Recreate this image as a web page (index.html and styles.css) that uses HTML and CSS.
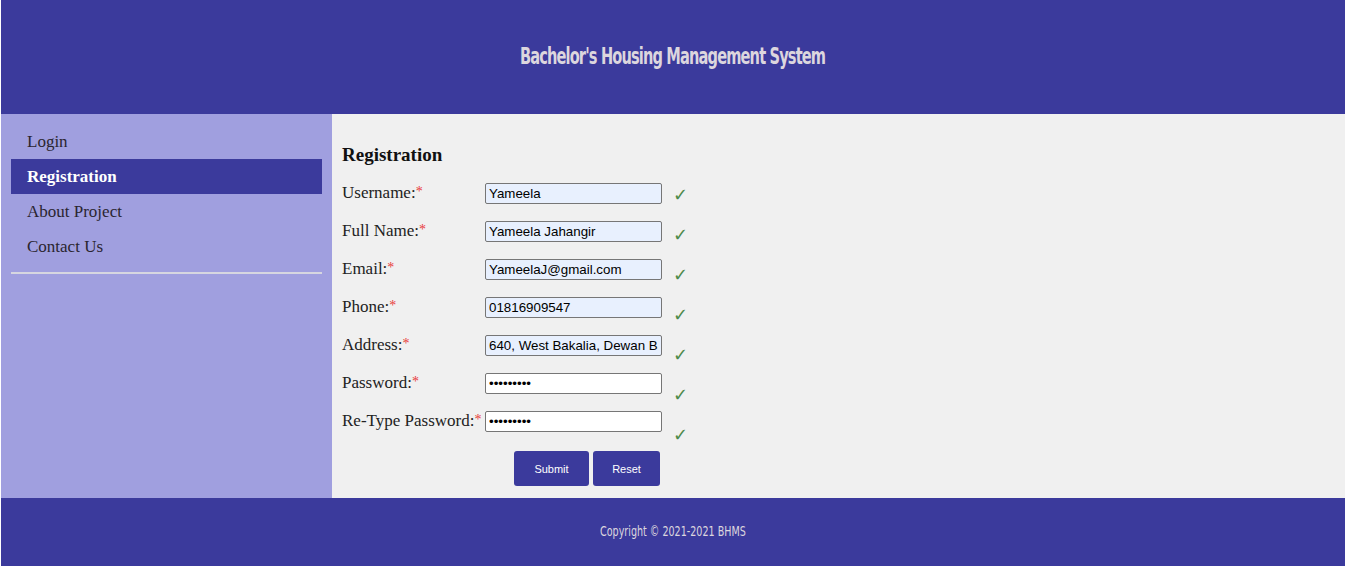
FILE: index.html
```html
<!DOCTYPE html>
<html lang="en">
<head>
<meta charset="utf-8">
<title>BHMS - Registration</title>
<link rel="stylesheet" href="styles.css">
</head>
<body>
<div class="page">
  <header class="top">
    <h1 class="site-title">Bachelor's Housing Management System</h1>
  </header>
  <div class="middle">
    <nav class="side">
      <ul class="menu">
        <li class="menu-item">Login</li>
        <li class="menu-item active">Registration</li>
        <li class="menu-item">About Project</li>
        <li class="menu-item">Contact Us</li>
      </ul>
      <div class="divider"></div>
    </nav>
    <main class="content">
      <h2 class="heading">Registration</h2>
      <div class="form-wrap">
        <form class="form">
          <div class="row"><label class="lbl">Username:<span class="req">*</span></label><input class="field filled" type="text" value="Yameela"></div>
          <div class="row"><label class="lbl">Full Name:<span class="req">*</span></label><input class="field filled" type="text" value="Yameela Jahangir"></div>
          <div class="row"><label class="lbl">Email:<span class="req">*</span></label><input class="field filled" type="text" value="YameelaJ@gmail.com"></div>
          <div class="row"><label class="lbl">Phone:<span class="req">*</span></label><input class="field filled" type="text" value="01816909547"></div>
          <div class="row"><label class="lbl">Address:<span class="req">*</span></label><input class="field filled" type="text" value="640, West Bakalia, Dewan Bazar"></div>
          <div class="row"><label class="lbl">Password:<span class="req">*</span></label><input class="field" type="password" value="123456789"></div>
          <div class="row"><label class="lbl">Re-Type Password:<span class="req">*</span></label><input class="field" type="password" value="123456789"></div>
          <div class="buttons">
            <button type="button" class="btn submit">Submit</button>
            <button type="button" class="btn reset">Reset</button>
          </div>
        </form>
        <div class="checks">
          <span class="check">✓</span>
          <span class="check">✓</span>
          <span class="check">✓</span>
          <span class="check">✓</span>
          <span class="check">✓</span>
          <span class="check">✓</span>
          <span class="check">✓</span>
        </div>
      </div>
    </main>
  </div>
  <footer class="bottom">
    <p class="copy">Copyright © 2021-2021 BHMS</p>
  </footer>
</div>
</body>
</html>
```
FILE: styles.css
```css
html, body {
  margin: 0;
  padding: 0;
  background: #ffffff;
}
.page {
  margin: 0 2px 2px 1px;
  display: flex;
  flex-direction: column;
}
.top {
  height: 114px;
  background: #3b3a9c;
  display: flex;
  align-items: center;
  justify-content: center;
}
.site-title {
  margin: 0;
  padding-bottom: 2px;
  font-family: "DejaVu Sans Condensed", "Liberation Sans", sans-serif;
  font-weight: bold;
  font-size: 23px;
  letter-spacing: -1.2px;
  color: #dcd6de;
  transform: scaleX(0.705);
}
.middle {
  display: flex;
  height: 384px;
}
.side {
  width: 311px;
  padding: 10px;
  background: #a09fdf;
  font-family: "Liberation Serif", serif;
}
.menu {
  list-style: none;
  margin: 0;
  padding: 0;
}
.menu-item {
  height: 35px;
  line-height: 35px;
  padding-left: 16px;
  font-size: 17px;
  color: #2a2530;
}
.menu-item.active {
  background: #3b3a9c;
  color: #ffffff;
  font-weight: bold;
}
.divider {
  margin-top: 8px;
  height: 0;
  border-top: 2px solid #d6d6e0;
}
.content {
  flex: 1;
  background: #f0f0f0;
  padding: 0 10px;
  font-family: "Liberation Serif", serif;
}
.heading {
  margin: 30px 0 0;
  font-size: 19px;
  line-height: 22px;
  font-weight: bold;
  color: #111111;
}
.form-wrap {
  display: flex;
  margin-top: 17px;
}
.form {
  display: flex;
  flex-direction: column;
  width: 320px;
}
.row {
  display: flex;
  align-items: baseline;
  height: 38px;
}
.lbl {
  width: 143px;
  font-size: 17px;
  color: #222222;
  white-space: nowrap;
}
.req {
  color: #e83a3a;
  font-size: 14px;
  vertical-align: 2px;
}
.field {
  box-sizing: border-box;
  width: 177px;
  height: 21px;
  margin: 0;
  padding: 1px 3px;
  border: 1px solid #767676;
  border-radius: 2px;
  background: #ffffff;
  font-family: "Liberation Sans", Arial, sans-serif;
  font-size: 13.33px;
  color: #000000;
}
.field.filled {
  background: #e8f0fe;
}
.buttons {
  display: flex;
  gap: 4px;
  margin-top: 2px;
  padding-left: 172px;
}
.btn {
  height: 35px;
  border: none;
  border-radius: 3px;
  background: #3b3a9c;
  color: #ffffff;
  font-family: "Liberation Sans", Arial, sans-serif;
  font-size: 11px;
  padding: 0;
}
.btn.submit { width: 75px; }
.btn.reset { width: 67px; }
.checks {
  display: flex;
  flex-direction: column;
  margin-left: 11px;
  padding-top: 1px;
}
.check {
  height: 40px;
  font-family: "DejaVu Sans", sans-serif;
  font-size: 18px;
  line-height: 22px;
  color: #4d8a4a;
}
.bottom {
  height: 68px;
  background: #3b3a9c;
  display: flex;
  align-items: center;
  justify-content: center;
}
.copy {
  margin: 0;
  padding-bottom: 2px;
  font-family: "DejaVu Sans Condensed", "Liberation Sans", sans-serif;
  font-size: 14px;
  color: #dcd6de;
  transform: scaleX(0.76);
}
```
